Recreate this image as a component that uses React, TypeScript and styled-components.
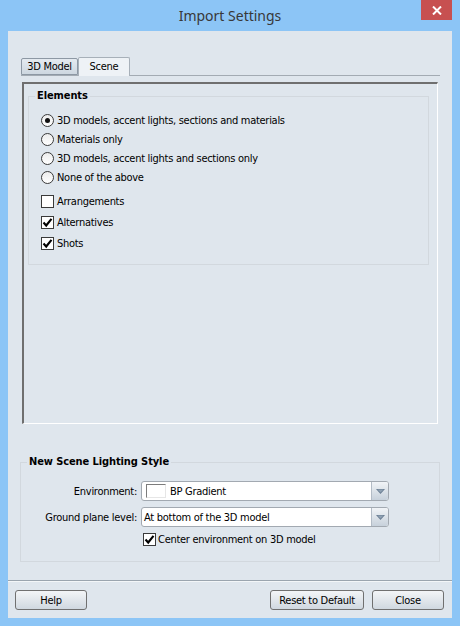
import React from 'react';
import styled, { createGlobalStyle } from 'styled-components';

const GlobalStyle = createGlobalStyle`
  html, body {
    margin: 0;
    padding: 0;
    width: 460px;
    height: 626px;
    overflow: hidden;
    background: #8cc5f6;
  }
  body {
    font-family: "DejaVu Sans Condensed", "DejaVu Sans", sans-serif;
    font-size: 11px;
    letter-spacing: -0.28px;
    color: #000;
  }
`;

const Window = styled.div`
  width: 460px;
  height: 626px;
  box-sizing: border-box;
  padding: 0 8px 8px;
  background: #8cc5f6;
  display: flex;
  flex-direction: column;
`;

const TitleBar = styled.div`
  position: relative;
  height: 31px;
  flex: none;
  display: flex;
  align-items: center;
  justify-content: center;
  padding-bottom: 1px;
  box-sizing: border-box;
  font-family: "Noto Sans", "Open Sans", sans-serif;
  font-size: 14px;
  letter-spacing: 0;
  color: #383838;
`;

const CloseButton = styled.div`
  position: absolute;
  top: 0;
  right: 0;
  width: 31px;
  height: 20px;
  background: #c75050;
  display: flex;
  align-items: center;
  justify-content: center;
`;

const Client = styled.div`
  flex: 1;
  background: #dfe6ed;
  display: flex;
  flex-direction: column;
  padding-bottom: 8px;
`;

const TabStrip = styled.div`
  margin: 26px 12px 0 13px;
  height: 18px;
  border-bottom: 1px solid #a3abb3;
  display: flex;
  align-items: flex-end;
`;

const Tab = styled.div<{ $active?: boolean; $width: number }>`
  box-sizing: border-box;
  width: ${(p) => p.$width}px;
  height: ${(p) => (p.$active ? 19 : 17)}px;
  margin-bottom: ${(p) => (p.$active ? -1 : 0)}px;
  border: 1px solid ${(p) => (p.$active ? '#a7b0b9' : '#8d98a4')};
  border-bottom: ${(p) => (p.$active ? 'none' : '1px solid #8d98a4')};
  border-radius: 2px 2px 0 0;
  background: ${(p) =>
    p.$active ? '#eef2f6' : 'linear-gradient(#e4eaf0, #cdd7e0)'};
  display: flex;
  align-items: center;
  justify-content: center;
  padding-bottom: ${(p) => (p.$active ? 1 : 0)}px;
`;

const TabPanel = styled.div`
  box-sizing: border-box;
  height: 342px;
  margin: 6px 14px 0 14px;
  border-top: 2px solid #6f6f6f;
  border-left: 2px solid #6f6f6f;
  border-right: 1px solid #ffffff;
  border-bottom: 1px solid #ffffff;
  padding: 5px 8px 0 4px;
`;

const Group = styled.fieldset`
  margin: 0;
  padding: 0;
  border: 1px solid #d2d8de;
  min-width: 0;
`;

const Legend = styled.legend`
  margin-left: 6px;
  padding: 0 2px;
  font-weight: bold;
  letter-spacing: -0.1px;
  line-height: 14px;
`;

const OptionList = styled.div`
  display: flex;
  flex-direction: column;
  padding: 8px 0 10px 12px;
`;

const OptionRow = styled.label<{ $height: number; $gapTop?: number }>`
  height: ${(p) => p.$height}px;
  margin-top: ${(p) => p.$gapTop ?? 0}px;
  display: flex;
  align-items: center;
  gap: 3px;
`;

const Radio = styled.span<{ $checked?: boolean }>`
  box-sizing: border-box;
  width: 13px;
  height: 13px;
  border-radius: 50%;
  border: 1px solid #3a3a3a;
  background: linear-gradient(#ececec, #ffffff);
  display: flex;
  align-items: center;
  justify-content: center;
  flex: none;
  &::after {
    content: '';
    display: ${(p) => (p.$checked ? 'block' : 'none')};
    width: 5px;
    height: 5px;
    border-radius: 50%;
    background: #111;
  }
`;

const Box = styled.span`
  box-sizing: border-box;
  width: 13px;
  height: 13px;
  border: 1px solid #3a3a3a;
  background: #fff;
  display: flex;
  align-items: center;
  justify-content: center;
  flex: none;
`;

const LightingGroup = styled(Group)`
  margin: 31px 12px 0 12px;
`;

const FormGrid = styled.div`
  display: grid;
  grid-template-columns: 116px 248px;
  column-gap: 4px;
  row-gap: 6px;
  padding: 12px 0 15px 0;
`;

const FieldLabel = styled.div`
  text-align: right;
  align-self: center;
`;

const Combo = styled.div`
  box-sizing: border-box;
  height: 20px;
  border: 1px solid #a2a9b1;
  border-radius: 3px;
  background: #fff;
  display: flex;
  align-items: stretch;
  overflow: hidden;
`;

const ComboValue = styled.div`
  flex: 1;
  display: flex;
  align-items: center;
  gap: 4px;
  padding-left: 2px;
`;

const Swatch = styled.span`
  box-sizing: border-box;
  width: 20px;
  height: 14px;
  margin-left: 2px;
  border-top: 1px solid #7c7c7c;
  border-left: 1px solid #7c7c7c;
  border-right: 1px solid #e6e6e6;
  border-bottom: 1px solid #e6e6e6;
  background: #fff;
`;

const DropButton = styled.div`
  width: 16px;
  border-left: 1px solid #b3bcc6;
  background: linear-gradient(#f1f4f7, #c7d1db);
  display: flex;
  align-items: center;
  justify-content: center;
`;

const CheckRow = styled.label`
  grid-column: 2;
  margin-left: 2px;
  height: 13px;
  display: flex;
  align-items: center;
  gap: 2px;
`;

const Separator = styled.div`
  margin-top: 18px;
  height: 1px;
  background: #9ba5af;
  box-shadow: 0 1px 0 #f3f6f8;
`;

const Footer = styled.div`
  margin-top: 9px;
  padding: 0 8px 0 7px;
  display: flex;
  gap: 8px;
`;

const Button = styled.div<{ $width: number; $push?: boolean }>`
  box-sizing: border-box;
  width: ${(p) => p.$width}px;
  height: 20px;
  margin-left: ${(p) => (p.$push ? 'auto' : '0')};
  border: 1px solid #707070;
  border-radius: 3px;
  background: linear-gradient(#f3f5f7, #d0d8e0);
  display: flex;
  align-items: center;
  justify-content: center;
`;

const Check = () => (
  <svg width="11" height="11" viewBox="0 0 11 11">
    <path d="M1.5 5.5 L4.2 8.5 L9.5 1.8" fill="none" stroke="#000" strokeWidth="2.1" />
  </svg>
);

const Arrow = () => (
  <svg width="9" height="5" viewBox="0 0 9 5">
    <polygon points="0,0 9,0 4.5,5" fill="#6a7e93" />
    <polygon points="1.5,0.5 7.5,0.5 4.5,3.5" fill="#8fa1b3" />
  </svg>
);

const CheckBox = ({ checked }: { checked?: boolean }) => <Box>{checked && <Check />}</Box>;

const radios = [
  '3D models, accent lights, sections and materials',
  'Materials only',
  '3D models, accent lights and sections only',
  'None of the above',
];

const checks = [
  { label: 'Arrangements', checked: false },
  { label: 'Alternatives', checked: true },
  { label: 'Shots', checked: true },
];

const App = () => (
  <Window>
    <GlobalStyle />
    <TitleBar>
      Import Settings
      <CloseButton>
        <svg width="10" height="9" viewBox="0 0 10 9">
          <path d="M1 0.5 L9 8.5 M9 0.5 L1 8.5" stroke="#fff" strokeWidth="2" />
        </svg>
      </CloseButton>
    </TitleBar>
    <Client>
      <TabStrip>
        <Tab $width={57}>3D Model</Tab>
        <Tab $width={52} $active>
          Scene
        </Tab>
      </TabStrip>
      <TabPanel>
        <Group>
          <Legend>Elements</Legend>
          <OptionList>
            {radios.map((r, i) => (
              <OptionRow key={r} $height={19}>
                <Radio $checked={i === 0} />
                {r}
              </OptionRow>
            ))}
            {checks.map((c, i) => (
              <OptionRow key={c.label} $height={21} $gapTop={i === 0 ? 4 : 0}>
                <CheckBox checked={c.checked} />
                {c.label}
              </OptionRow>
            ))}
          </OptionList>
        </Group>
      </TabPanel>
      <LightingGroup>
        <Legend>New Scene Lighting Style</Legend>
        <FormGrid>
          <FieldLabel>Environment:</FieldLabel>
          <Combo>
            <ComboValue>
              <Swatch />
              BP Gradient
            </ComboValue>
            <DropButton>
              <Arrow />
            </DropButton>
          </Combo>
          <FieldLabel>Ground plane level:</FieldLabel>
          <Combo>
            <ComboValue>At bottom of the 3D model</ComboValue>
            <DropButton>
              <Arrow />
            </DropButton>
          </Combo>
          <CheckRow>
            <CheckBox checked />
            Center environment on 3D model
          </CheckRow>
        </FormGrid>
      </LightingGroup>
      <Separator />
      <Footer>
        <Button $width={72}>Help</Button>
        <Button $width={94} $push>
          Reset to Default
        </Button>
        <Button $width={72}>Close</Button>
      </Footer>
    </Client>
  </Window>
);

export default App;
